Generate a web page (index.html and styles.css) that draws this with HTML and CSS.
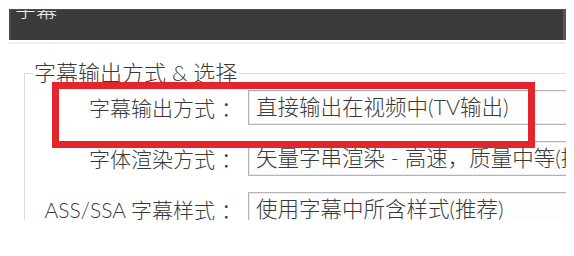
FILE: index.html
```html
<!DOCTYPE html>
<html lang="zh-CN">
<head>
<meta charset="utf-8">
<link rel="stylesheet" href="styles.css">
</head>
<body>
<div class="frame">
  <div class="titlebar"><span class="title">字幕</span></div>
  <div class="sep"></div>
  <fieldset class="group">
    <legend class="legend">字幕输出方式 &amp; 选择</legend>
    <div class="rows">
      <div class="label">字幕输出方式<span class="colon">：</span></div>
      <div class="combo">直接输出在视频中(TV输出)</div>
      <div class="label">字体渲染方式<span class="colon">：</span></div>
      <div class="combo">矢量字串渲染 - 高速，质量中等(推荐)</div>
      <div class="label">ASS/SSA 字幕样式<span class="colon">：</span></div>
      <div class="combo">使用字幕中所含样式(推荐)</div>
    </div>
  </fieldset>
  <div class="highlight"></div>
</div>
</body>
</html>
```

FILE: styles.css
```css
html, body {
  margin: 0;
  padding: 0;
  background: #ffffff;
}
body {
  font-family: "Lato", "Noto Sans CJK SC", "Noto Sans", sans-serif;
  font-weight: 300;
  color: #3a3a3a;
  overflow: hidden;
}
.frame {
  position: relative;
  width: 566px;
  height: 220px;
  overflow: hidden;
  padding-top: 9px;
  box-sizing: border-box;
}
.titlebar {
  margin-left: 9px;
  height: 31px;
  background: #3b3b3b;
  border-left: 2px solid #4a4a4a;
  border-right: 3px solid #555555;
  border-top: 1px solid #4e4e4e;
  box-sizing: border-box;
  overflow: hidden;
}
.title {
  display: block;
  color: #f2f2f2;
  font-size: 21px;
  line-height: 20px;
  margin-top: -11px;
  padding-left: 4px;
}
.sep {
  margin: 2px 0 0 9px;
  height: 2px;
  background: #ededed;
}
.group {
  margin: 18px -40px 0 24px;
  padding: 0 0 20px 0;
  border: 1px solid #dcdcdc;
  border-right: none;
}
.legend {
  margin-left: 8px;
  padding: 0 1px;
  font-size: 22px;
  line-height: 22px;
  color: #3a3a3a;
}
.rows {
  display: grid;
  grid-template-columns: 211px 1fr;
  column-gap: 12px;
  row-gap: 16px;
  padding-top: 6px;
  align-items: center;
}
.label {
  text-align: right;
  font-size: 21px;
  line-height: 28px;
  white-space: nowrap;
  color: #3a3a3a;
}
.colon {
  display: inline-block;
  margin-left: 6px;
  margin-right: -6px;
}
.combo {
  height: 35px;
  box-sizing: border-box;
  border: 1px solid #b3b3b3;
  box-shadow: inset 0 0 0 1px #ececec;
  background: #fdfdfd;
  font-size: 21.5px;
  line-height: 32px;
  padding-left: 7px;
  white-space: nowrap;
  overflow: hidden;
  color: #3a3a3a;
}
.highlight {
  position: absolute;
  left: 52px;
  top: 82px;
  width: 483px;
  height: 66px;
  box-sizing: border-box;
  border: 7px solid #e3262c;
}
```
